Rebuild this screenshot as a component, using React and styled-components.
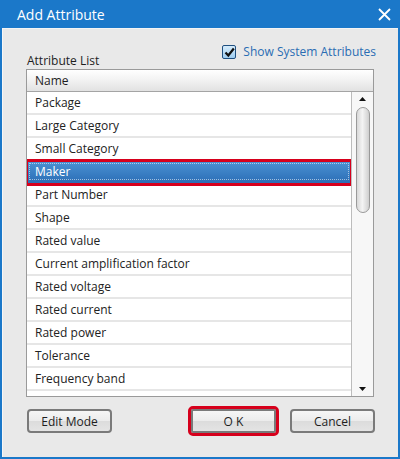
import styled, { createGlobalStyle, css } from "styled-components";

const GlobalStyle = createGlobalStyle`
  html, body {
    margin: 0;
    padding: 0;
    background: #ffffff;
  }
  body {
    font-family: "Open Sans", "Noto Sans", "Liberation Sans", sans-serif;
  }
`;

const Window = styled.div`
  width: 400px;
  height: 459px;
  box-sizing: border-box;
  background: #1b78c9;
  padding: 0 2px 2px 2px;
  display: flex;
  flex-direction: column;
`;

const TitleBar = styled.div`
  height: 28px;
  flex: none;
  display: flex;
  align-items: center;
  justify-content: space-between;
  padding: 0 6px 0 15px;
  color: #ffffff;
  font-size: 14px;
`;

const CloseButton = styled.div`
  width: 16px;
  height: 16px;
  display: flex;
  align-items: center;
  justify-content: center;
`;

const Body = styled.div`
  flex: 1;
  background: #e9e9e9;
  border-left: 1px solid #f6f6f6;
  border-top: 1px solid #f4f4f4;
  padding: 13px 24px 24px 23px;
  display: flex;
  flex-direction: column;
`;

const TopRow = styled.div`
  height: 27px;
  display: flex;
  align-items: flex-end;
  justify-content: space-between;
`;

const ListLabel = styled.div`
  font-size: 12px;
  line-height: 16px;
  color: #1e1e1e;
  padding-left: 1px;
`;

const CheckLabel = styled.label`
  display: flex;
  align-items: center;
  gap: 7px;
  margin-bottom: 9px;
  margin-right: -2px;
  font-size: 12px;
  line-height: 16px;
  color: #2a6cb3;
`;

const CheckBox = styled.span`
  width: 12px;
  height: 12px;
  border: 1px solid #1f4f80;
  border-radius: 2px;
  background: linear-gradient(#d6ecfb, #9fcdf0);
  display: flex;
  align-items: center;
  justify-content: center;
`;

const ListBox = styled.div`
  height: 328px;
  box-sizing: border-box;
  border: 1px solid #9a9a9a;
  background: #ffffff;
  display: flex;
  flex-direction: column;
`;

const Header = styled.div`
  height: 22px;
  flex: none;
  box-sizing: border-box;
  border-bottom: 1px solid #a4a4a4;
  background: linear-gradient(#ffffff 0%, #f3f3f3 45%, #e2e2e2 100%);
  font-size: 12px;
  line-height: 21px;
  color: #1e1e1e;
  padding-left: 8px;
`;

const ListArea = styled.div`
  flex: 1;
  display: flex;
  min-height: 0;
`;

const Rows = styled.div`
  flex: 1;
  overflow: hidden;
`;

const Row = styled.div`
  height: 23px;
  box-sizing: border-box;
  border-bottom: 2px solid #e6e6e6;
  font-size: 12px;
  line-height: 21px;
  padding-left: 8px;
  color: #222222;
  position: relative;

  ${({ selected }) =>
    selected &&
    css`
      background: linear-gradient(#4b93d4, #2d6fb7);
      color: #ffffff;
      border-bottom-color: #2d6fb7;
      outline: 3px solid #d6001c;
      outline-offset: -1px;
      &::after {
        content: "";
        position: absolute;
        inset: 2px 2px 2px 2px;
        border: 1px dotted rgba(255, 255, 255, 0.55);
      }
    `}
`;

const ScrollBar = styled.div`
  width: 21px;
  flex: none;
  border-left: 1px solid #bcbcbc;
  background: #f7f7f7;
  display: flex;
  flex-direction: column;
  align-items: center;
`;

const Arrow = styled.div`
  height: 14px;
  flex: none;
  display: flex;
  align-items: center;
  justify-content: center;
`;

const Track = styled.div`
  flex: 1;
  width: 100%;
  display: flex;
  flex-direction: column;
  align-items: center;
`;

const Thumb = styled.div`
  width: 14px;
  height: 106px;
  margin-top: 1px;
  box-sizing: border-box;
  border: 1px solid #9a9a9a;
  border-radius: 7px;
  background: linear-gradient(90deg, #d8d8d8, #f4f4f4 45%, #cfcfcf);
`;

const ButtonRow = styled.div`
  margin-top: 12px;
  display: flex;
  justify-content: space-between;
  padding-left: 1px;
`;

const ButtonGroup = styled.div`
  display: flex;
  gap: 14px;
  margin-right: -1px;
`;

const Button = styled.button`
  width: 85px;
  height: 24px;
  box-sizing: border-box;
  border: 2px solid #7a7a7a;
  border-radius: 4px;
  background: linear-gradient(#f6f6f6 0%, #ececec 48%, #dcdcdc 52%, #e4e4e4 100%);
  font-family: inherit;
  font-size: 12px;
  color: #1e1e1e;
  padding: 0;
  ${({ highlighted }) =>
    highlighted &&
    css`
      outline: 3px solid #d6001c;
      outline-offset: 0px;
      border-radius: 2px;
    `}
`;

const items = [
  "Package",
  "Large Category",
  "Small Category",
  "Maker",
  "Part Number",
  "Shape",
  "Rated value",
  "Current amplification factor",
  "Rated voltage",
  "Rated current",
  "Rated power",
  "Tolerance",
  "Frequency band",
  "",
];

export default function App() {
  return (
    <>
      <GlobalStyle />
      <Window>
        <TitleBar>
          <span>Add Attribute</span>
          <CloseButton>
            <svg width="13" height="13" viewBox="0 0 13 13">
              <path d="M1 1 L12 12 M12 1 L1 12" stroke="#ffffff" strokeWidth="1.8" />
            </svg>
          </CloseButton>
        </TitleBar>
        <Body>
          <TopRow>
            <ListLabel>Attribute List</ListLabel>
            <CheckLabel>
              <CheckBox>
                <svg width="11" height="11" viewBox="0 0 11 11">
                  <path d="M1.5 5.5 L4.3 8.5 L9.8 1.5" stroke="#111111" strokeWidth="2.2" fill="none" />
                </svg>
              </CheckBox>
              Show System Attributes
            </CheckLabel>
          </TopRow>
          <ListBox>
            <Header>Name</Header>
            <ListArea>
              <Rows>
                {items.map((name, i) => (
                  <Row key={i} selected={name === "Maker"}>
                    {name}
                  </Row>
                ))}
              </Rows>
              <ScrollBar>
                <Arrow>
                  <svg width="7" height="4" viewBox="0 0 7 4">
                    <path d="M0 4 L3.5 0 L7 4 Z" fill="#111111" />
                  </svg>
                </Arrow>
                <Track>
                  <Thumb />
                </Track>
                <Arrow>
                  <svg width="7" height="4" viewBox="0 0 7 4">
                    <path d="M0 0 L7 0 L3.5 4 Z" fill="#111111" />
                  </svg>
                </Arrow>
              </ScrollBar>
            </ListArea>
          </ListBox>
          <ButtonRow>
            <Button>Edit Mode</Button>
            <ButtonGroup>
              <Button highlighted>O K</Button>
              <Button>Cancel</Button>
            </ButtonGroup>
          </ButtonRow>
        </Body>
      </Window>
    </>
  );
}
